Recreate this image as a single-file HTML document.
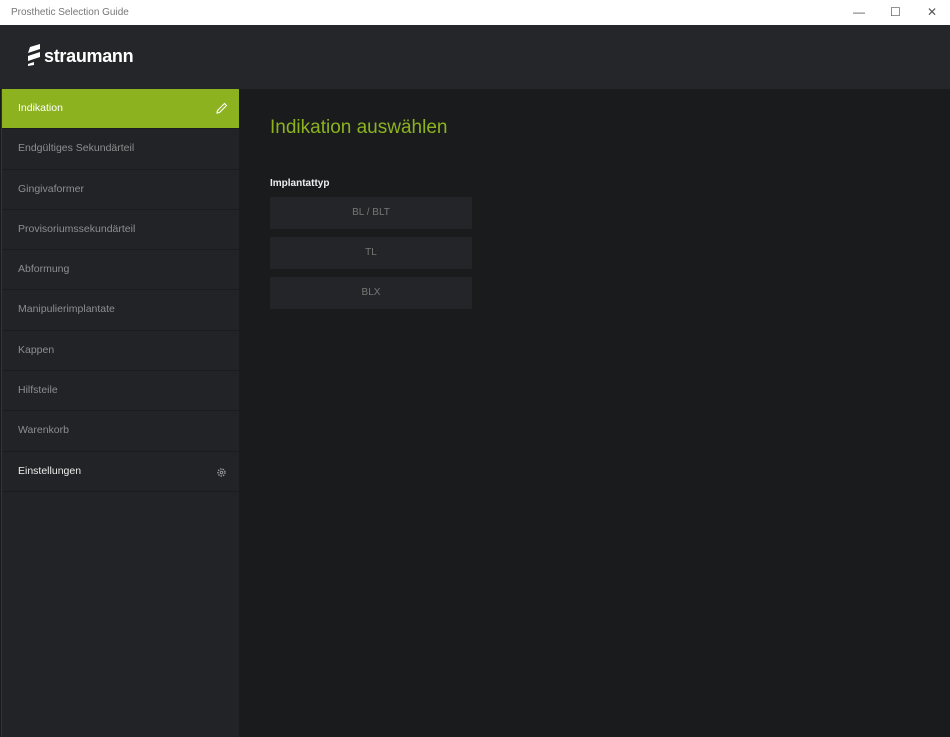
<!DOCTYPE html>
<html><head><meta charset="utf-8"><style>
*{margin:0;padding:0;box-sizing:border-box}
body{width:950px;height:737px;overflow:hidden;background:#1a1b1d;font-family:"Liberation Sans",sans-serif;position:relative}
.tb{position:absolute;left:0;top:0;width:950px;height:25px;background:#fff;color:#777;font-size:10px;line-height:25px;padding-left:11px}
.tb .c{position:absolute;top:0;font-size:12px;color:#555}
.hd{position:absolute;left:0;top:25px;width:950px;height:64px;background:#252629}
.logo{position:absolute;left:26px;top:44px;color:#fff;font-weight:bold;font-size:18px;letter-spacing:-0.3px}
.sb{position:absolute;left:1px;top:89px;width:238px;height:648px;background:#222326;border-left:1px solid #333}
.it{height:40.3px;border-bottom:1px solid #1a1b1d;color:#8d8e90;font-size:10.5px;line-height:39px;padding-left:16px;position:relative}
.it.a{background:#8cb31f;color:#fff}
.it.w{color:#eee}
h1{position:absolute;left:270px;top:117px;color:#8cb31f;font-weight:normal;font-size:19px}
.lb{position:absolute;left:270px;top:178px;color:#eee;font-weight:bold;font-size:10px}
.bt{position:absolute;left:270px;width:202px;height:32px;background:#242528;color:#777;font-size:10px;text-align:center;line-height:32px}
</style></head><body>
<div class="tb">Prosthetic Selection Guide
<span class="c" style="left:853px">—</span><span class="c" style="left:890px">☐</span><span class="c" style="left:927px">✕</span></div>
<div class="hd"></div>
<div class="logo"><svg width="16" height="22" viewBox="0 0 16 22" style="vertical-align:-4px;margin-right:2px"><path d="M4 3 L14 0 L14 5 L2 9Z M2 12 L14 8 L14 13 L2 17Z M2 20 L8 18 L8 21 L2 22Z" fill="#fff"/></svg>straumann</div>
<div class="sb">
<div class="it a">Indikation<svg style="position:absolute;right:11px;top:13px" width="12" height="12" viewBox="0 0 12 12"><path d="M1 11 L1.5 8.5 L8.5 1.5 L10.5 3.5 L3.5 10.5Z" fill="none" stroke="#fff" stroke-width="1.1"/></svg></div>
<div class="it">Endgültiges Sekundärteil</div>
<div class="it">Gingivaformer</div>
<div class="it">Provisoriumssekundärteil</div>
<div class="it">Abformung</div>
<div class="it">Manipulierimplantate</div>
<div class="it">Kappen</div>
<div class="it">Hilfsteile</div>
<div class="it">Warenkorb</div>
<div class="it w">Einstellungen<svg style="position:absolute;right:12px;top:15px" width="11" height="11" viewBox="0 0 11 11"><circle cx="5.5" cy="5.5" r="3.5" fill="none" stroke="#999" stroke-width="1.4" stroke-dasharray="1.5 1"/><circle cx="5.5" cy="5.5" r="1.3" fill="none" stroke="#999"/></svg></div>
</div>
<h1>Indikation auswählen</h1>
<div class="lb">Implantattyp</div>
<div class="bt" style="top:197px">BL / BLT</div>
<div class="bt" style="top:237px">TL</div>
<div class="bt" style="top:277px">BLX</div>
</body></html>
